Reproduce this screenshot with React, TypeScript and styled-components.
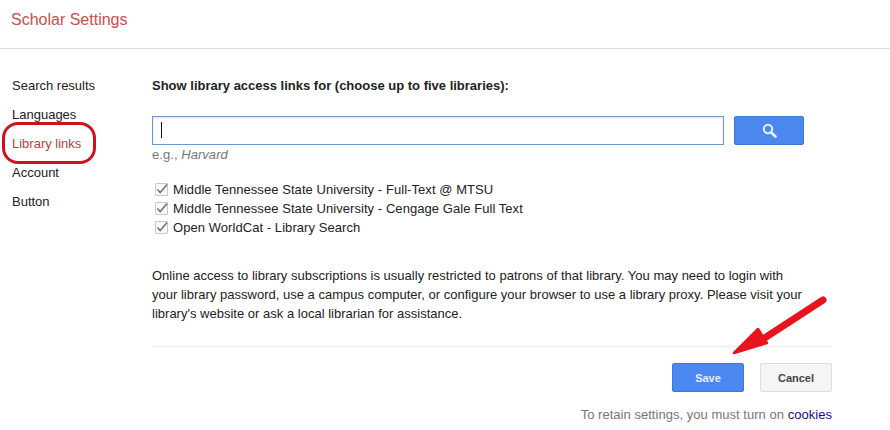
import React from 'react'
import styled, { createGlobalStyle } from 'styled-components'

const libraries = [
  'Middle Tennessee State University - Full-Text @ MTSU',
  'Middle Tennessee State University - Cengage Gale Full Text',
  'Open WorldCat - Library Search',
]

const navItems = ['Search results', 'Languages', 'Library links', 'Account', 'Button']

const App = () => {
  return (
    <Page>
      <GlobalStyle />
      <Header>
        <Title>Scholar Settings</Title>
      </Header>

      <Body>
        <Sidebar>
          {navItems.map((item) => (
            <NavItem key={item} $active={item === 'Library links'}>
              {item}
            </NavItem>
          ))}
        </Sidebar>

        <Main>
          <Heading>Show library access links for (choose up to five libraries):</Heading>

          <SearchRow>
            <SearchField>
              <Caret />
            </SearchField>
            <SearchButton aria-label="Search">
              <svg width="15" height="15" viewBox="0 0 15 15" aria-hidden="true">
                <circle cx="6" cy="6" r="4.2" fill="none" stroke="#e6effd" strokeWidth="2.1" />
                <path d="M9.2 9.2 L13.4 13.4" stroke="#e6effd" strokeWidth="2.8" strokeLinecap="round" />
              </svg>
            </SearchButton>
          </SearchRow>

          <Hint>
            e.g., <em>Harvard</em>
          </Hint>

          <CheckList>
            {libraries.map((library) => (
              <CheckRow key={library}>
                <CheckBox>
                  <svg width="13" height="13" viewBox="0 0 13 13" aria-hidden="true">
                    <path d="M2.4 6.4 L5.2 9.6 L12 1.6" fill="none" stroke="#707070" strokeWidth="1.5" />
                  </svg>
                </CheckBox>
                {library}
              </CheckRow>
            ))}
          </CheckList>

          <Notice>
            Online access to library subscriptions is usually restricted to patrons of that library. You may need to login with
            <br />
            your library password, use a campus computer, or configure your browser to use a library proxy. Please visit your
            <br />
            library's website or ask a local librarian for assistance.
          </Notice>

          <Divider />

          <Actions>
            <SaveButton>Save</SaveButton>
            <CancelButton>Cancel</CancelButton>
          </Actions>

          <Footnote>
            To retain settings, you must turn on <CookieLink href="#">cookies</CookieLink>
          </Footnote>
        </Main>
      </Body>

      <CircleMark aria-hidden="true" />
      <ArrowMark width="100" height="64" viewBox="0 0 100 64" aria-hidden="true">
        <path d="M92 6 L32 45" stroke="#e8141c" strokeWidth="7" strokeLinecap="round" />
        <path d="M27 35 L36 49 L3 59 Z" fill="#e8141c" stroke="#e8141c" strokeWidth="2.5" strokeLinejoin="round" />
      </ArrowMark>
    </Page>
  )
}

const GlobalStyle = createGlobalStyle`
  html, body {
    margin: 0;
    background: #fff;
  }

  body {
    font-family: "Liberation Sans", Arial, sans-serif;
    font-size: 13px;
    color: #222;
  }
`

const Page = styled.div`
  position: relative;
  width: 890px;
  height: 430px;
  overflow: hidden;
`

const Header = styled.header`
  height: 49px;
  padding: 10px 0 0 11px;
  box-sizing: border-box;
  border-bottom: 1px solid #dcdcdc;
`

const Title = styled.h1`
  margin: 0;
  font-size: 16px;
  line-height: 19px;
  font-weight: 400;
  color: #c9504c;
`

const Body = styled.div`
  display: flex;
  height: 381px;
`

const Sidebar = styled.nav`
  width: 152px;
  padding: 22px 0 0 12px;
  box-sizing: border-box;
  flex: none;
`

const NavItem = styled.div<{ $active?: boolean }>`
  height: 29px;
  line-height: 29px;
  color: ${({ $active }) => ($active ? '#b8423f' : '#222')};
`

const Main = styled.main`
  width: 680px;
  display: flex;
  flex-direction: column;
`

const Heading = styled.h2`
  margin: 28px 0 0;
  font-size: 13px;
  line-height: 17px;
  font-weight: 700;
  color: #222;
`

const SearchRow = styled.div`
  display: flex;
  align-items: flex-start;
  gap: 10px;
  margin-top: 22px;
`

const SearchField = styled.div`
  width: 572px;
  height: 29px;
  box-sizing: border-box;
  padding: 5px 0 0 8px;
  border: 1px solid #6e97cf;
  box-shadow: inset 0 1px 2px rgba(0, 0, 0, 0.12);
  background: #fff;
`

const Caret = styled.div`
  width: 1px;
  height: 16px;
  background: #111;
`

const SearchButton = styled.button`
  width: 70px;
  height: 29px;
  padding: 0;
  display: flex;
  align-items: center;
  justify-content: center;
  border: 1px solid #3f78d8;
  border-radius: 2px;
  background: #4a87ee;
`

const Hint = styled.div`
  margin-top: 1px;
  line-height: 17px;
  color: #777;
  letter-spacing: 0.05px;
`

const CheckList = styled.div`
  display: flex;
  flex-direction: column;
  margin-top: 17px;
`

const CheckRow = styled.label`
  display: flex;
  align-items: center;
  height: 19px;
  padding-left: 3px;
  gap: 5px;
  color: #222;
  letter-spacing: 0.06px;
`

const CheckBox = styled.span`
  width: 13px;
  height: 13px;
  flex: none;
  box-sizing: border-box;
  border: 1px solid #c8c8c8;
  border-radius: 1px;
  background: #fafafa;
  display: flex;

  svg {
    flex: none;
    margin: -1px;
  }
`

const Notice = styled.p`
  margin: 29px 0 0;
  line-height: 19px;
  color: #222;
  white-space: nowrap;
  letter-spacing: 0.01px;
`

const Divider = styled.div`
  height: 1px;
  margin-top: 23px;
  background: #ebebeb;
`

const Actions = styled.div`
  display: flex;
  justify-content: flex-end;
  gap: 16px;
  margin-top: 16px;
`

const ActionButton = styled.button`
  width: 72px;
  height: 29px;
  padding: 0;
  border-radius: 2px;
  font-family: inherit;
  font-size: 11px;
  font-weight: 700;
`

const SaveButton = styled(ActionButton)`
  border: 1px solid #3f78d8;
  background: #4a87ee;
  color: #e8effc;
`

const CancelButton = styled(ActionButton)`
  border: 1px solid #dcdcdc;
  background: #f5f5f5;
  color: #444;
`

const Footnote = styled.div`
  margin-top: 14px;
  line-height: 17px;
  text-align: right;
  color: #777;
  letter-spacing: 0.03px;
`

const CookieLink = styled.a`
  color: #1a0d8c;
  text-decoration: none;
`

const CircleMark = styled.div`
  position: absolute;
  left: 2px;
  top: 122px;
  width: 94px;
  height: 42px;
  box-sizing: border-box;
  border: 3px solid #d0101c;
  border-radius: 16px;
`

const ArrowMark = styled.svg`
  position: absolute;
  left: 731px;
  top: 294px;
`

export default App
